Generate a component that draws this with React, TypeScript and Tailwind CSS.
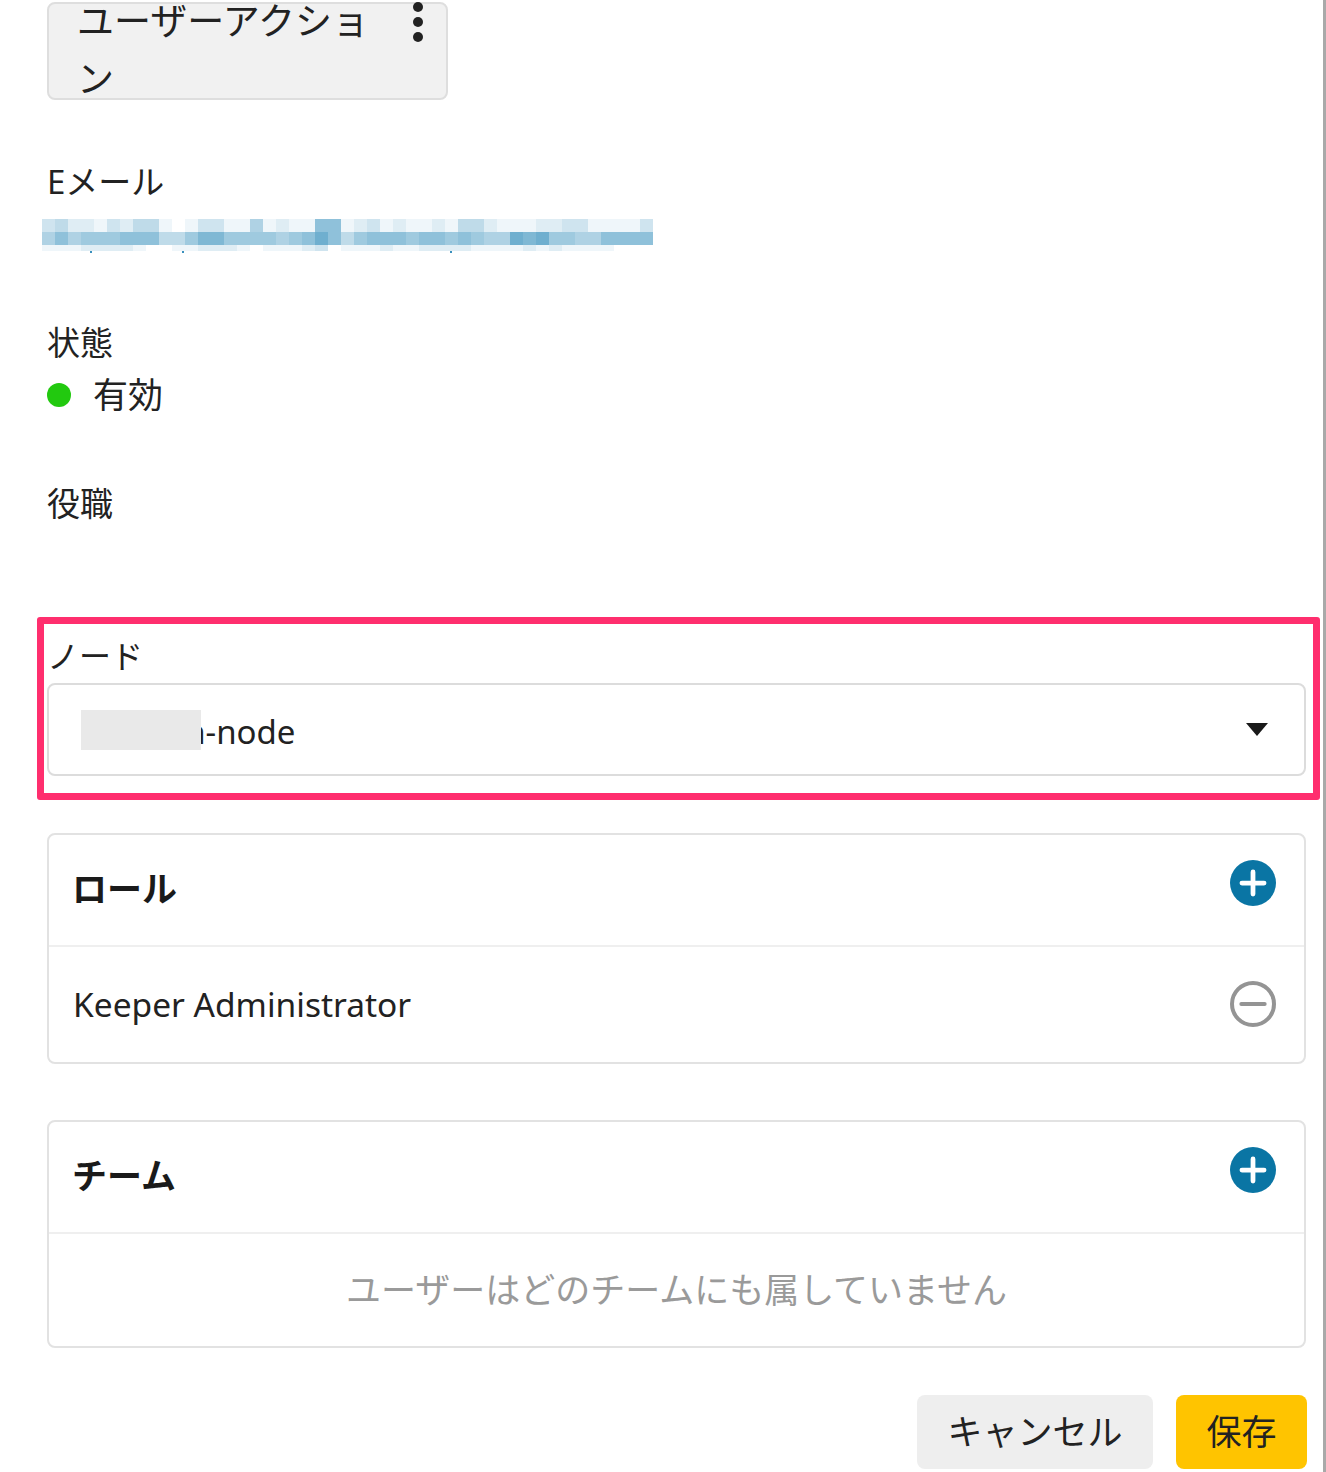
import { Minus, Plus } from "lucide-react";

const font = "font-['Noto_Sans','Noto_Sans_CJK_JP',sans-serif]";

const emailRows = [
  { y: 0, h: 13, cells: "34221324410133115121177123121121442111223311113" },
  { y: 13, h: 13, cells: "57566677744688666656797467776776765598966557777" },
  { y: 26, h: 6, cells: "11122221001122210111230111211222211112121111000" },
];

const EmailBlur = () => {
  return (
    <svg width="613" height="34" viewBox="0 0 613 34" className="block blur-[0.4px]">
      {emailRows.map((row) =>
        row.cells.split("").map((cell, index) => (
          <rect
            key={`${row.y}-${index}`}
            x={index * 13}
            y={row.y}
            width="13"
            height={row.h}
            fill="#4f9dc4"
            fillOpacity={Number(cell) / 11}
          />
        )),
      )}
      <rect x="48" y="32" width="2" height="2" fill="#3a90bd" />
      <rect x="140" y="32" width="2" height="2" fill="#3a90bd" />
      <rect x="408" y="32" width="2" height="2" fill="#3a90bd" />
    </svg>
  );
};

const AddButton = () => {
  return (
    <span className="flex size-[46px] items-center justify-center rounded-full bg-[#0a75a4] text-white">
      <Plus size={38} strokeWidth={3} />
    </span>
  );
};

const RemoveButton = () => {
  return (
    <span className="flex size-[46px] items-center justify-center rounded-full border-4 border-[#949494] text-[#949494]">
      <Minus size={40} strokeWidth={2.4} className="shrink-0" />
    </span>
  );
};

const Card = ({
  title,
  className,
  children,
}: {
  title: string;
  className: string;
  children: React.ReactNode;
}) => {
  return (
    <div className={`mr-[17px] rounded-lg border-2 border-[#e2e2e2] ${className}`}>
      <div className="flex h-[112px] items-center justify-between border-b-2 border-[#efefef] pl-[23px] pr-[28px]">
        <span className="-mt-[2px] text-[35px] font-bold text-[#1a1a1a]">{title}</span>
        <span className="-mt-[14px]">
          <AddButton />
        </span>
      </div>
      {children}
    </div>
  );
};

export default function App() {
  return (
    <div
      className={`${font} h-[1472px] w-[1326px] overflow-hidden border-r-[3px] border-[#a9a9a9] bg-white pl-[47px] text-[33px] text-[#222222]`}
    >
      <div className="mt-[2px] flex h-[98px] w-[401px] justify-between rounded-lg border-2 border-[#dedede] bg-[#f1f1f1] pl-[28px] pr-[22px]">
        <span className="-mt-[12px] w-[300px] text-[37px] leading-[58px]">ユーザーアクション</span>
        <svg width="12" height="40" viewBox="0 0 12 40" className="-mt-[2px] fill-[#222222]">
          <circle cx="6" cy="5" r="5" />
          <circle cx="6" cy="20" r="5" />
          <circle cx="6" cy="35" r="5" />
        </svg>
      </div>

      <div className="mt-[57px] h-[50px] leading-[50px]">Eメール</div>
      <div className="-ml-[5px] mt-[12px]">
        <EmailBlur />
      </div>

      <div className="mt-[65px] h-[50px] leading-[50px]">状態</div>
      <div className="mt-[2px] flex h-[50px] items-center">
        <span className="size-[24px] rounded-full bg-[#22c90f]" />
        <span className="ml-[22px] text-[35px]">有効</span>
      </div>

      <div className="mt-[59px] h-[50px] leading-[50px]">役職</div>

      <div className="-ml-[10px] mr-[3px] mt-[88px] h-[183px] rounded-[3px] border-[7px] border-[#ff2e6e] pl-[3px] pr-[7px] pt-[7px]">
        <div className="h-[50px] text-[32px] leading-[50px]">ノード</div>
        <div className="relative mt-[2px] flex h-[93px] items-center justify-between rounded-lg border-2 border-[#dcdcdc] pl-[38px] pr-[35px]">
          <span className="pt-[5px]">domain-node</span>
          <span className="absolute left-[32px] top-[25px] h-[40px] w-[120px] bg-[#e9e9e9]" />
          <svg width="24" height="13" viewBox="0 0 24 13" className="fill-[#1a1a1a]">
            <path d="M1 0h22L12 13z" />
          </svg>
        </div>
      </div>

      <Card title="ロール" className="mt-[33px] h-[231px]">
        <div className="flex h-[114px] items-center justify-between pl-[24px] pr-[28px]">
          <span className="text-[33.5px]">Keeper Administrator</span>
          <RemoveButton />
        </div>
      </Card>

      <Card title="チーム" className="mt-[56px] h-[228px]">
        <div className="flex h-[112px] items-center justify-center text-[35px] text-[#9a9a9a]">
          ユーザーはどのチームにも属していません
        </div>
      </Card>

      <div className="mr-[16px] mt-[47px] flex justify-end gap-[23px]">
        <button className="h-[74px] w-[236px] rounded-lg bg-[#eeeeee] text-[35px]">キャンセル</button>
        <button className="h-[74px] w-[131px] rounded-lg bg-[#ffc400] text-[35px]">保存</button>
      </div>
    </div>
  );
}
